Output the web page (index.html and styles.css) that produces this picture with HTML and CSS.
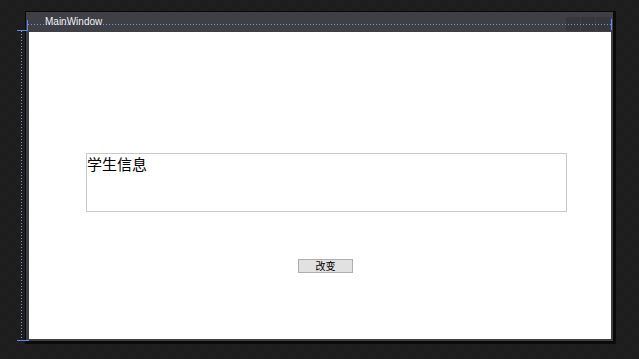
FILE: index.html
```html
<!DOCTYPE html>
<html>
<head>
<meta charset="utf-8">
<link rel="stylesheet" href="styles.css">
</head>
<body>
<div class="stage">
  <div class="window">
    <div class="titlebar">
      <span class="title">MainWindow</span>
      <div class="caption-buttons">
        <span class="cbtn"></span><span class="cbtn"></span><span class="cbtn"></span>
      </div>
    </div>
    <div class="client">
      <div class="textbox">学生信息</div>
      <div class="button">改变</div>
    </div>
  </div>
  <div class="guide guide-title"></div>
  <div class="guide guide-left"></div>
  <div class="guide corner-top-h"></div>
  <div class="guide corner-top-v"></div>
  <div class="guide corner-bottom-h"></div>
  <div class="guide corner-right-v"></div>
</div>
</body>
</html>
```
FILE: styles.css
```css
html, body {
  margin: 0;
  padding: 0;
  width: 639px;
  height: 359px;
  overflow: hidden;
}
body {
  background-color: #1e1e1e;
  background-image: repeating-conic-gradient(#1d1d1d 0 25%, #1f1f1f 0 50%);
  background-size: 16px 16px;
}
.stage {
  position: relative;
  padding: 11px 0 0 25px;
}
.window {
  border-style: solid;
  border-color: #0a0a0a;
  border-width: 1px 3px 3px 1px;
  background: #3f3f46;
  display: flex;
  flex-direction: column;
  padding: 0 2px 2px 3px;
  box-sizing: content-box;
  width: 582px;
  height: 327px;
}
.titlebar {
  height: 20px;
  display: flex;
  align-items: center;
  justify-content: space-between;
  position: relative;
}
.title {
  font-family: "Liberation Sans", Arial, sans-serif;
  font-size: 10px;
  color: #f1f1f1;
  margin-left: 16px;
  position: relative;
  z-index: 2;
  line-height: 12px;
}
.caption-buttons {
  display: flex;
  gap: 1px;
  align-self: flex-start;
  margin-top: 5px;
  margin-right: 1px;
}
.cbtn {
  width: 14px;
  height: 14px;
  background: #36363c;
}
.client {
  flex: 1;
  background: #ffffff;
  display: flex;
  flex-direction: column;
  align-items: flex-start;
}
.textbox {
  margin-top: 121px;
  margin-left: 57px;
  width: 479px;
  height: 57px;
  border: 1px solid #c9c9c9;
  font-family: "Noto Sans CJK SC", "Noto Sans", sans-serif;
  font-size: 15px;
  line-height: 20px;
  color: #000;
  box-sizing: content-box;
}
.button {
  margin-top: 47px;
  margin-left: 269px;
  width: 53px;
  height: 12px;
  border: 1px solid #adadad;
  background: #e1e1e1;
  font-family: "Noto Sans CJK SC", sans-serif;
  font-size: 10px;
  line-height: 12px;
  text-align: center;
  color: #000;
}
.guide {
  position: absolute;
  z-index: 1;
}
.guide-title {
  left: 28px;
  top: 24px;
  width: 583px;
  height: 1px;
  background-image: linear-gradient(to right, #6b98f0 50%, transparent 50%);
  background-size: 3px 1px;
}
.guide-left {
  left: 21px;
  top: 31px;
  width: 1px;
  height: 309px;
  background-image: linear-gradient(to bottom, #6b98f0 50%, transparent 50%);
  background-size: 1px 3px;
}
.corner-top-h {
  left: 17px;
  top: 30px;
  width: 11px;
  height: 1px;
  background: #5b8ae8;
}
.corner-top-v {
  left: 27px;
  top: 20px;
  width: 1px;
  height: 11px;
  background: #5b8ae8;
}
.corner-bottom-h {
  left: 17px;
  top: 340px;
  width: 12px;
  height: 1px;
  background: #5b8ae8;
}
.corner-right-v {
  left: 611px;
  top: 19px;
  width: 1px;
  height: 11px;
  background: #5b8ae8;
}
```
